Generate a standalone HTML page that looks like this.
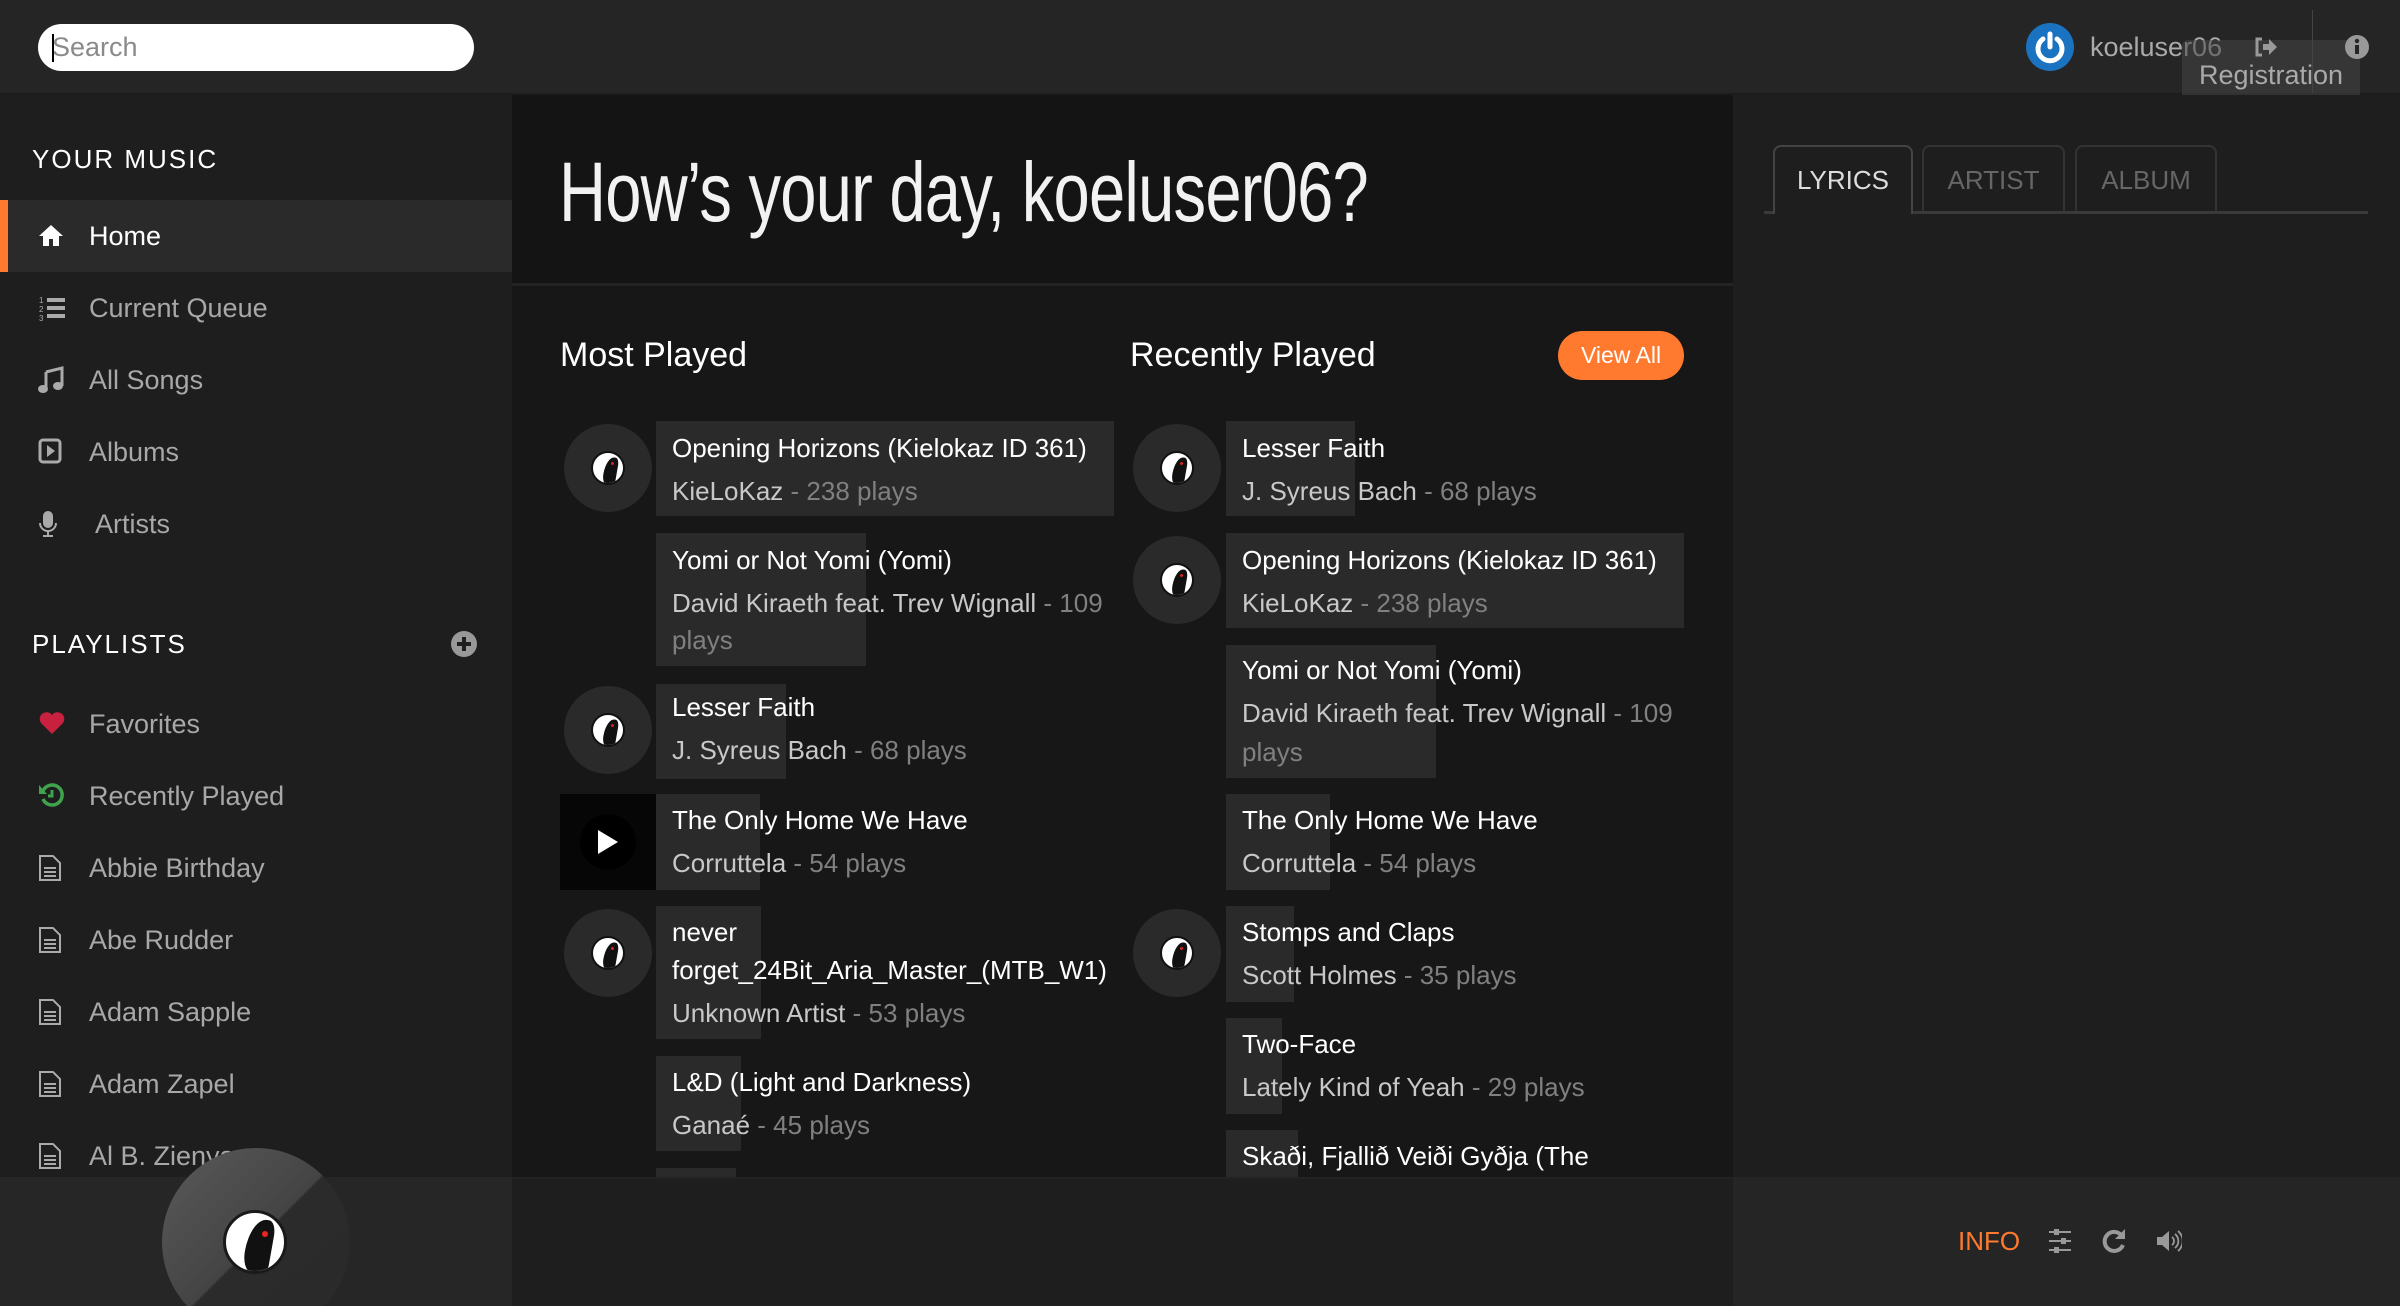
<!DOCTYPE html>
<html><head><meta charset="utf-8"><style>
*{margin:0;padding:0;box-sizing:border-box}
html,body{width:2400px;height:1306px;overflow:hidden}
body{background:#171717;font-family:"Liberation Sans",sans-serif}
#wrap{position:relative;width:2400px;height:1306px;overflow:hidden}
.a{position:absolute}
#hdr{left:0;top:0;width:2400px;height:95px;background:#252525;border-bottom:2px solid #1c1c1c}
#search{left:38px;top:24px;width:436px;height:47px;background:#fff;border-radius:24px;color:#8a8a8a;font-size:27px;line-height:47px;padding-left:14px}
#search:before{content:"";position:absolute;left:14px;top:10px;width:2px;height:28px;background:#000}
#side{left:0;top:95px;width:512px;height:1083px;background:#1e1e1e;overflow:hidden}
.hd{position:absolute;left:32px;color:#fff;font-size:26px;letter-spacing:2px;line-height:30px}
.nav{position:absolute;left:0;width:512px;height:72px;color:#a8a8a8;font-size:27px;line-height:72px}
.nav .t{position:absolute;left:89px;top:0}
.nav svg{position:absolute;left:38px;top:22px}
#main{left:512px;top:95px;width:1221px;height:1083px;background:#171717;overflow:hidden}
#mtop{left:0;top:0;width:1221px;height:191px;background:#141414;border-bottom:3px solid #232323}
#greet{left:47px;top:52px;color:#f2f2f2;font-size:84px;line-height:90px;transform:scaleX(.775);transform-origin:left top;white-space:nowrap;letter-spacing:-1px}
.sec{position:absolute;color:#fff;font-size:34px;line-height:40px;white-space:nowrap}
#va{left:1046px;top:236px;width:126px;height:49px;border-radius:25px;background:#ff7a2f;color:#fff;font-size:23px;line-height:49px;text-align:center}
.thumb{position:absolute;width:88px;height:88px;border-radius:50%;background:#2a2a2a}
.bird{position:absolute;left:27px;top:27px;width:34px;height:34px;border-radius:50%;background:#fff;border:2px solid #111;overflow:hidden}
.bird:before{content:"";position:absolute;left:11px;top:4px;width:13px;height:28px;background:#111;border-radius:70% 30% 20% 40%;transform:rotate(10deg)}
.bird:after{content:"";position:absolute;left:18px;top:9px;width:3px;height:3px;border-radius:50%;background:#d22}
.bx{position:absolute;background:#2a2a2a}
.tx{position:absolute;white-space:nowrap;font-size:26px;line-height:38px}
.tl{color:#fff}
.sb{color:#c8c8c8}
.sb i{font-style:normal;color:#808080}
#right{left:1733px;top:95px;width:667px;height:1083px;background:#1e1e1e}
.tab{position:absolute;top:50px;height:66px;border:2px solid #333;border-bottom:none;border-radius:8px 8px 0 0;color:#666;font-size:26px;text-align:center;line-height:66px}
#foot{left:0;top:1177px;width:2400px;height:129px;background:#1e1e1e;border-top:2px solid #232323}
</style></head><body><div id="wrap">
<div id="hdr" class="a"></div>
<div id="search" class="a">Search</div>
<div class="a" style="left:2026px;top:23px;width:48px;height:48px;border-radius:50%;background:#1a73c0"></div>
<svg class="a" style="left:2026px;top:23px" width="48" height="48" viewBox="0 0 48 48"><path d="M17 16a12 12 0 1 0 14 0" fill="none" stroke="#fff" stroke-width="5" stroke-linecap="round"/><path d="M24 11v13" stroke="#fff" stroke-width="5" stroke-linecap="round"/></svg>
<div class="a" style="left:2090px;top:30px;color:#aaa;font-size:27px;line-height:34px">koeluser06</div>
<div class="a" style="left:2182px;top:40px;width:178px;height:67px;background:rgba(70,70,70,.55);border-radius:6px"></div>
<div class="a" style="left:2312px;top:10px;width:1px;height:83px;background:#444"></div>
<svg class="a" style="left:2254px;top:36px" width="24" height="22" viewBox="0 0 24 22"><path d="M8 3H3v16h5" fill="none" stroke="#999" stroke-width="3"/><path d="M9 8h6V3l8 8-8 8v-5H9z" fill="#999"/></svg>
<svg class="a" style="left:2344px;top:34px" width="26" height="26" viewBox="0 0 26 26"><circle cx="13" cy="13" r="12" fill="#999"/><rect x="11" y="11" width="4" height="9" fill="#252525"/><circle cx="13" cy="7" r="2.2" fill="#252525"/></svg>
<div class="a" style="left:2199px;top:58px;color:#aaa;font-size:27px;line-height:34px">Registration</div>

<div id="side" class="a">
<div class="hd" style="top:49px">YOUR MUSIC</div>
<div class="nav" style="top:105px;background:#2a2a2a;color:#fff"><div class="a" style="left:0;top:0;width:8px;height:72px;background:#ff7a2f"></div>
<svg width="26" height="26" viewBox="0 0 26 26"><path d="M13 3L1 14h4v10h6v-7h4v7h6V14h4z" fill="#fff"/></svg><span class="t">Home</span></div>
<div class="nav" style="top:177px"><svg width="28" height="28" viewBox="0 0 28 28"><rect x="9" y="4" width="18" height="4" fill="#aaa"/><rect x="9" y="12" width="18" height="4" fill="#aaa"/><rect x="9" y="20" width="18" height="4" fill="#aaa"/><text x="1" y="9" font-size="8" fill="#aaa">1</text><text x="1" y="18" font-size="8" fill="#aaa">2</text><text x="1" y="27" font-size="8" fill="#aaa">3</text></svg><span class="t">Current Queue</span></div>
<div class="nav" style="top:249px"><svg width="26" height="28" viewBox="0 0 26 28"><path d="M8 6l16-4v18" fill="none" stroke="#aaa" stroke-width="3"/><path d="M8 6v17" stroke="#aaa" stroke-width="3"/><ellipse cx="5" cy="23" rx="5" ry="4" fill="#aaa"/><ellipse cx="20" cy="20" rx="5" ry="4" fill="#aaa"/></svg><span class="t">All Songs</span></div>
<div class="nav" style="top:321px"><svg width="24" height="26" viewBox="0 0 24 26"><rect x="2" y="2" width="20" height="22" rx="3" fill="none" stroke="#aaa" stroke-width="3"/><path d="M9 7l8 6-8 6z" fill="#aaa"/></svg><span class="t">Albums</span></div>
<div class="nav" style="top:393px"><svg width="20" height="28" viewBox="0 0 20 28"><rect x="5" y="1" width="10" height="17" rx="5" fill="#aaa"/><path d="M2 13a8 8 0 0 0 16 0M10 21v5M5 26h10" fill="none" stroke="#aaa" stroke-width="2"/></svg><span class="t" style="left:95px">Artists</span></div>
<div class="hd" style="top:534px">PLAYLISTS</div>
<svg class="a" style="left:450px;top:535px" width="28" height="28" viewBox="0 0 28 28"><circle cx="14" cy="14" r="13" fill="#999"/><path d="M14 7v14M7 14h14" stroke="#1e1e1e" stroke-width="4"/></svg>
<div class="nav" style="top:593px"><svg width="28" height="26" viewBox="0 0 28 26"><path d="M14 24L3 13A6.5 6.5 0 0 1 14 5a6.5 6.5 0 0 1 11 8z" fill="#c8203f"/></svg><span class="t">Favorites</span></div>
<div class="nav" style="top:665px"><svg width="26" height="26" viewBox="0 0 26 26"><path d="M5 9a10 10 0 1 1 0 8" fill="none" stroke="#3fa34d" stroke-width="3.5"/><path d="M1 3v9h8z" fill="#3fa34d"/><path d="M14 8v6h-4" fill="none" stroke="#3fa34d" stroke-width="3"/></svg><span class="t">Recently Played</span></div>
<div class="nav" style="top:737px"><svg width="24" height="28" viewBox="0 0 24 28"><path d="M2 2h13l7 7v17H2z" fill="none" stroke="#aaa" stroke-width="2"/><path d="M6 14h12M6 18h12M6 22h12" stroke="#aaa" stroke-width="2"/></svg><span class="t">Abbie Birthday</span></div>
<div class="nav" style="top:809px"><svg width="24" height="28" viewBox="0 0 24 28"><path d="M2 2h13l7 7v17H2z" fill="none" stroke="#aaa" stroke-width="2"/><path d="M6 14h12M6 18h12M6 22h12" stroke="#aaa" stroke-width="2"/></svg><span class="t">Abe Rudder</span></div>
<div class="nav" style="top:881px"><svg width="24" height="28" viewBox="0 0 24 28"><path d="M2 2h13l7 7v17H2z" fill="none" stroke="#aaa" stroke-width="2"/><path d="M6 14h12M6 18h12M6 22h12" stroke="#aaa" stroke-width="2"/></svg><span class="t">Adam Sapple</span></div>
<div class="nav" style="top:953px"><svg width="24" height="28" viewBox="0 0 24 28"><path d="M2 2h13l7 7v17H2z" fill="none" stroke="#aaa" stroke-width="2"/><path d="M6 14h12M6 18h12M6 22h12" stroke="#aaa" stroke-width="2"/></svg><span class="t">Adam Zapel</span></div>
<div class="nav" style="top:1025px"><svg width="24" height="28" viewBox="0 0 24 28"><path d="M2 2h13l7 7v17H2z" fill="none" stroke="#aaa" stroke-width="2"/><path d="M6 14h12M6 18h12M6 22h12" stroke="#aaa" stroke-width="2"/></svg><span class="t">Al B. Zienya</span></div>
</div>

<div id="main" class="a">
<div id="mtop" class="a"></div>
<div id="greet" class="a">How’s your day, koeluser06?</div>
<div class="sec" style="left:48px;top:240px">Most Played</div>
<div class="sec" style="left:618px;top:240px">Recently Played</div>
<div id="va" class="a">View All</div>
</div>

<div class="thumb" style="left:564px;top:424px"><div class="bird"></div></div>
<div class="bx" style="left:656px;top:421px;width:458px;height:95px"></div>
<div class="tx tl" style="left:672px;top:429px">Opening Horizons (Kielokaz ID 361)</div>
<div class="tx sb" style="left:672px;top:472px">KieLoKaz <i>- 238 plays</i></div>

<div class="bx" style="left:656px;top:533px;width:210px;height:133px"></div>
<div class="tx tl" style="left:672px;top:541px">Yomi or Not Yomi (Yomi)</div>
<div class="tx sb" style="left:672px;top:584px">David Kiraeth feat. Trev Wignall <i>- 109</i></div>
<div class="tx sb" style="left:672px;top:621px"><i>plays</i></div>

<div class="thumb" style="left:564px;top:686px"><div class="bird"></div></div>
<div class="bx" style="left:656px;top:684px;width:130px;height:95px"></div>
<div class="tx tl" style="left:672px;top:688px">Lesser Faith</div>
<div class="tx sb" style="left:672px;top:731px">J. Syreus Bach <i>- 68 plays</i></div>

<div class="a" style="left:560px;top:794px;width:96px;height:96px;background:#060606"></div>
<div class="a" style="left:580px;top:814px;width:56px;height:56px;border-radius:50%;background:#000"></div>
<svg class="a" style="left:596px;top:828px" width="24" height="28" viewBox="0 0 24 28"><path d="M2 2l20 12L2 26z" fill="#fff"/></svg>
<div class="bx" style="left:656px;top:794px;width:104px;height:96px"></div>
<div class="tx tl" style="left:672px;top:801px">The Only Home We Have</div>
<div class="tx sb" style="left:672px;top:844px">Corruttela <i>- 54 plays</i></div>

<div class="thumb" style="left:564px;top:909px"><div class="bird"></div></div>
<div class="bx" style="left:656px;top:906px;width:105px;height:133px"></div>
<div class="tx tl" style="left:672px;top:913px">never</div>
<div class="tx tl" style="left:672px;top:951px">forget_24Bit_Aria_Master_(MTB_W1)</div>
<div class="tx sb" style="left:672px;top:994px">Unknown Artist <i>- 53 plays</i></div>

<div class="bx" style="left:656px;top:1056px;width:85px;height:95px"></div>
<div class="tx tl" style="left:672px;top:1063px">L&amp;D (Light and Darkness)</div>
<div class="tx sb" style="left:672px;top:1106px">Ganaé <i>- 45 plays</i></div>
<div class="bx" style="left:656px;top:1168px;width:80px;height:10px"></div>

<div class="thumb" style="left:1133px;top:424px"><div class="bird"></div></div>
<div class="bx" style="left:1226px;top:421px;width:129px;height:95px"></div>
<div class="tx tl" style="left:1242px;top:429px">Lesser Faith</div>
<div class="tx sb" style="left:1242px;top:472px">J. Syreus Bach <i>- 68 plays</i></div>

<div class="thumb" style="left:1133px;top:536px"><div class="bird"></div></div>
<div class="bx" style="left:1226px;top:533px;width:458px;height:95px"></div>
<div class="tx tl" style="left:1242px;top:541px">Opening Horizons (Kielokaz ID 361)</div>
<div class="tx sb" style="left:1242px;top:584px">KieLoKaz <i>- 238 plays</i></div>

<div class="bx" style="left:1226px;top:645px;width:210px;height:133px"></div>
<div class="tx tl" style="left:1242px;top:651px">Yomi or Not Yomi (Yomi)</div>
<div class="tx sb" style="left:1242px;top:694px">David Kiraeth feat. Trev Wignall <i>- 109</i></div>
<div class="tx sb" style="left:1242px;top:733px"><i>plays</i></div>

<div class="bx" style="left:1226px;top:794px;width:104px;height:96px"></div>
<div class="tx tl" style="left:1242px;top:801px">The Only Home We Have</div>
<div class="tx sb" style="left:1242px;top:844px">Corruttela <i>- 54 plays</i></div>

<div class="thumb" style="left:1133px;top:909px"><div class="bird"></div></div>
<div class="bx" style="left:1226px;top:906px;width:68px;height:96px"></div>
<div class="tx tl" style="left:1242px;top:913px">Stomps and Claps</div>
<div class="tx sb" style="left:1242px;top:956px">Scott Holmes <i>- 35 plays</i></div>

<div class="bx" style="left:1226px;top:1018px;width:56px;height:96px"></div>
<div class="tx tl" style="left:1242px;top:1025px">Two-Face</div>
<div class="tx sb" style="left:1242px;top:1068px">Lately Kind of Yeah <i>- 29 plays</i></div>

<div class="bx" style="left:1226px;top:1130px;width:72px;height:48px"></div>
<div class="tx tl" style="left:1242px;top:1137px">Skaði, Fjallið Veiði Gyðja (The</div>

<div id="right" class="a">
<div class="a" style="left:31px;top:116px;width:604px;height:3px;background:#3a3a3a"></div>
<div class="tab" style="left:40px;width:140px;height:69px;border-color:#444;background:#1e1e1e;color:#ddd">LYRICS</div>
<div class="tab" style="left:189px;width:143px">ARTIST</div>
<div class="tab" style="left:342px;width:142px">ALBUM</div>
</div>

<div id="foot" class="a"></div>
<div class="a" style="left:0;top:1177px;width:512px;height:129px;background:#262626"></div>
<div class="a" style="left:1733px;top:1177px;width:667px;height:129px;background:#252525"></div>
<div class="a" style="left:0;top:1140px;width:512px;height:166px;overflow:hidden">
<div class="a" style="left:162px;top:8px;width:188px;height:188px;border-radius:50%;background:linear-gradient(135deg,#5a5a5a 0%,#444 49.5%,#2b2b2b 50.5%,#2a2a2a 100%)"></div>
<div class="a" style="left:223px;top:70px;width:64px;height:64px;border-radius:50%;background:#fff;border:3px solid #1a1a1a;overflow:hidden"><div class="a" style="left:20px;top:6px;width:26px;height:54px;background:#111;border-radius:70% 30% 20% 40%;transform:rotate(10deg)"></div><div class="a" style="left:36px;top:18px;width:6px;height:6px;border-radius:50%;background:#e22"></div></div>
</div>
<div class="a" style="left:1958px;top:1224px;color:#ff7a2f;font-size:26px;line-height:34px">INFO</div>
<svg class="a" style="left:2048px;top:1228px" width="24" height="26" viewBox="0 0 24 26"><path d="M1 4h22M1 13h22M1 22h22" stroke="#999" stroke-width="2"/><rect x="6" y="1" width="5" height="6" fill="#999"/><rect x="13" y="10" width="5" height="6" fill="#999"/><rect x="6" y="19" width="5" height="6" fill="#999"/></svg>
<svg class="a" style="left:2102px;top:1228px" width="24" height="26" viewBox="0 0 24 26"><path d="M20 8A9.5 9.5 0 1 0 21 17" fill="none" stroke="#999" stroke-width="4"/><path d="M23 1v10H13z" fill="#999"/></svg>
<svg class="a" style="left:2156px;top:1228px" width="26" height="26" viewBox="0 0 26 26"><path d="M1 9h5l7-6v20l-7-6H1z" fill="#999"/><path d="M16 9a5 5 0 0 1 0 8M19 6a9 9 0 0 1 0 14M22 3a13 13 0 0 1 0 20" fill="none" stroke="#999" stroke-width="1.8"/></svg>
</div></body></html>
